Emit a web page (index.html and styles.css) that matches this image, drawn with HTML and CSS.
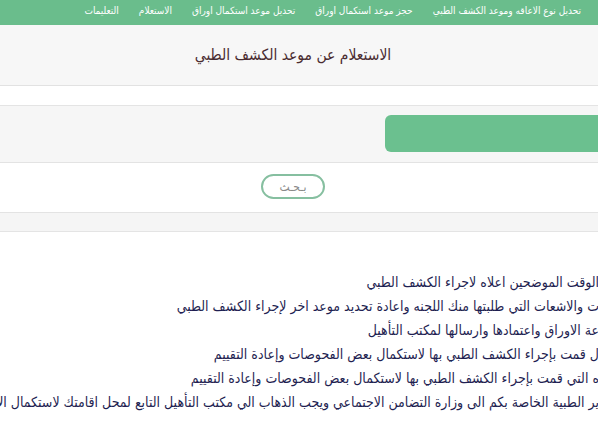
FILE: index.html
```html
<!DOCTYPE html>
<html lang="ar">
<head>
<meta charset="utf-8">
<title>الاستعلام عن موعد الكشف الطبي</title>
<link rel="stylesheet" href="styles.css">
</head>
<body>
<div class="page" dir="rtl">
  <nav class="topnav">
    <a class="nav-item">الرئيسية</a>
    <a class="nav-item">تحديل نوع الاعاقه وموعد الكشف الطبي</a>
    <a class="nav-item">حجز موعد استكمال اوراق</a>
    <a class="nav-item">تحديل موعد استكمال اوراق</a>
    <a class="nav-item">الاستعلام</a>
    <a class="nav-item">التعليمات</a>
  </nav>
  <header class="title-bar">
    <h1 class="title">الاستعلام عن موعد الكشف الطبي</h1>
  </header>
  <div class="strip"></div>
  <div class="field-row">
    <div class="select-box"></div>
  </div>
  <div class="action-row">
    <button class="search-btn" type="button">بـحـث</button>
  </div>
  <div class="strip strip-gray"></div>
  <ul class="notes">
    <li>الوقت الموضحين اعلاه لاجراء الكشف الطبي</li>
    <li>ت والاشعات التي طلبتها منك اللجنه واعادة تحديد موعد اخر لإجراء الكشف الطبي</li>
    <li>عة الاوراق واعتمادها وارسالها لمكتب التأهيل</li>
    <li>ل قمت بإجراء الكشف الطبي بها لاستكمال بعض الفحوصات وإعادة التقييم</li>
    <li>ه التي قمت بإجراء الكشف الطبي بها لاستكمال بعض الفحوصات وإعادة التقييم</li>
    <li>ير الطبية الخاصة بكم الى وزارة التضامن الاجتماعي ويجب الذهاب الي مكتب التأهيل التابع لمحل اقامتك لاستكمال الاجراءات</li>
  </ul>
</div>
</body>
</html>
```

FILE: styles.css
```css
html, body {
  margin: 0;
  padding: 0;
  background: #ffffff;
  overflow: hidden;
}
body {
  width: 598px;
  height: 430px;
  font-family: "DejaVu Sans Condensed", "DejaVu Sans", sans-serif;
}
.page {
  width: 806px;
  margin-left: -110px;
}
.topnav {
  display: flex;
  height: 25px;
  align-items: flex-start;
  background: #6abd8c;
  box-shadow: 0 1px 1px rgba(70, 140, 100, 0.5);
  padding-right: 54px;
}
.nav-item {
  color: #ffffff;
  font-size: 10px;
  line-height: 21px;
  padding: 0 10px;
  white-space: nowrap;
}
.title-bar {
  background: #f7f7f7;
  border-bottom: 1px solid #e2e2e2;
  padding: 18px 0;
}
.title {
  margin: 0;
  text-align: center;
  font-size: 15.5px;
  line-height: 24px;
  font-weight: normal;
  color: #4a2c31;
}
.strip {
  height: 19px;
  background: #ffffff;
  border-bottom: 1px solid #e4e4e4;
}
.strip-gray {
  height: 18px;
  background: #f5f5f5;
}
.field-row {
  background: #f6f6f6;
  border-bottom: 1px solid #e3e3e3;
  padding: 9px 0 10px;
}
.select-box {
  width: 300px;
  height: 37px;
  margin-right: 11px;
  background: #6bc08f;
  border-radius: 6px;
}
.action-row {
  background: #ffffff;
  border-bottom: 1px solid #e3e3e3;
  padding: 11px 0 13px;
  display: flex;
  justify-content: center;
}
.search-btn {
  width: 64px;
  height: 25px;
  border: 2px solid #86bfa0;
  border-radius: 13px;
  background: #ffffff;
  color: #8a8a8a;
  font-family: "DejaVu Sans Condensed", "DejaVu Sans", sans-serif;
  font-size: 12px;
  letter-spacing: 1px;
  padding: 0;
}
.notes {
  list-style: none;
  margin: 0;
  padding: 38px 97px 0 0;
  color: #1f1f52;
  font-size: 14px;
  line-height: 24px;
}
.notes li {
  white-space: nowrap;
}
```
